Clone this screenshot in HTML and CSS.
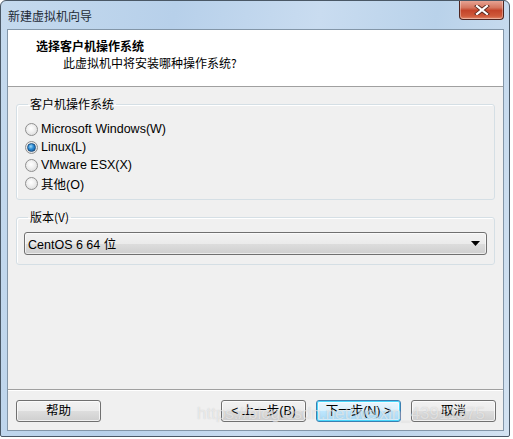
FILE: index.html
```html
<!DOCTYPE html>
<html lang="zh-CN">
<head>
<meta charset="utf-8">
<title>新建虚拟机向导</title>
<link rel="stylesheet" href="styles.css">
</head>
<body>
<div class="window">
  <div class="titlebar">
    <span class="title">新建虚拟机向导</span>
    <button class="close" aria-label="关闭">
      <svg width="18" height="10" viewBox="0 0 18 10">
        <path d="M4 1 L14 9 M14 1 L4 9" stroke="#5a2a20" stroke-width="4" stroke-linecap="square"/>
        <path d="M4 1 L14 9 M14 1 L4 9" stroke="#ffffff" stroke-width="2.2" stroke-linecap="square"/>
      </svg>
    </button>
  </div>
  <div class="client">
    <div class="header">
      <div class="h-title">选择客户机操作系统</div>
      <div class="h-sub">此虚拟机中将安装哪种操作系统?</div>
    </div>
    <div class="body">
      <fieldset class="group os-group">
        <legend>客户机操作系统</legend>
        <label class="radio"><span class="dot"></span>Microsoft Windows(W)</label>
        <label class="radio"><span class="dot on"></span>Linux(L)</label>
        <label class="radio"><span class="dot"></span>VMware ESX(X)</label>
        <label class="radio"><span class="dot"></span>其他(O)</label>
      </fieldset>
      <fieldset class="group ver-group">
        <legend>版本(V)</legend>
        <div class="combo">
          <span>CentOS 6 64 位</span>
          <svg width="9" height="5" viewBox="0 0 9 5"><path d="M0 0 H9 L4.5 5 Z" fill="#000"/></svg>
        </div>
      </fieldset>
    </div>
    <div class="footer">
      <button class="btn">帮助</button>
      <div class="spacer"></div>
      <button class="btn">&lt; 上一步(B)</button>
      <button class="btn default">下一步(N) &gt;</button>
      <button class="btn">取消</button>
    </div>
  </div>
  <div class="watermark">https://blog.csdn.net/weixin_43911375</div>
</div>
</body>
</html>
```
FILE: styles.css
```css
* { box-sizing: border-box; }
body {
  margin: 0;
  background: #ffffff;
  font-family: "Liberation Sans", "Noto Sans CJK SC", sans-serif;
  font-size: 12px;
  color: #000;
}
.window {
  position: relative;
  width: 510px;
  height: 437px;
  border: 1px solid #4a5866;
  border-radius: 6px 6px 2px 2px;
  background: linear-gradient(100deg, #c5daee 0%, #b7d0ea 30%, #c9dcf0 55%, #b9d2ea 75%, #d3e2f1 100%);
  padding: 0 5px 5px 6px;
  display: flex;
  flex-direction: column;
  overflow: hidden;
}
.titlebar {
  height: 28px;
  display: flex;
  align-items: flex-start;
}
.title {
  margin-top: 6px;
  padding-left: 1px;
  font-family: "Noto Sans CJK SC", sans-serif;
  color: #1e2a36;
  font-size: 12px;
}
.close {
  margin-left: auto;
  margin-right: 0;
  margin-top: -1px;
  width: 45px;
  height: 20px;
  border: 1px solid #4e2520;
  border-top: none;
  border-radius: 0 0 4px 4px;
  background: linear-gradient(#e9a99a 0%, #d5765f 40%, #c4442a 55%, #cf5a3b 85%, #e38b6e 100%);
  display: flex;
  align-items: center;
  justify-content: center;
  padding: 0;
  box-shadow: inset 0 0 0 1px rgba(255,255,255,0.35);
}
.client {
  flex: 1;
  border: 1px solid #8396a8;
  background: #f0f0f0;
  display: flex;
  flex-direction: column;
}
.header {
  height: 57px;
  background: #ffffff;
  border-bottom: 1px solid #a0a0a0;
  padding: 8px 0 0 28px;
  font-family: "Noto Sans CJK SC", sans-serif;
}
.h-title {
  font-weight: bold;
  line-height: 16px;
}
.h-sub {
  margin-top: 1px;
  padding-left: 27px;
  line-height: 16px;
}
.body {
  padding: 9px 8px 0 8px;
  flex: 1;
}
.group {
  margin: 0;
  border: 1px solid #d5dfe5;
  border-radius: 3px;
  padding: 0 7px;
  box-shadow: 1px 1px 0 #ffffff inset;
}
.group legend {
  padding: 0 2px;
  margin-left: 4px;
  font-family: "Noto Sans CJK SC", sans-serif;
  line-height: 16px;
  color: #000;
}
.os-group {
  height: 104px;
  padding-top: 8px;
}
.radio {
  display: flex;
  align-items: center;
  height: 18px;
  gap: 3px;
  font-size: 12.5px;
  font-family: "Liberation Sans", "Noto Sans CJK SC", sans-serif;
}
.dot {
  width: 13px;
  height: 13px;
  border-radius: 50%;
  border: 1px solid #8f8f8f;
  background: radial-gradient(circle at 45% 40%, #ffffff 0%, #f0f0f0 40%, #d4d4d4 100%);
  display: flex;
  align-items: center;
  justify-content: center;
  margin-left: 1px;
}
.dot.on::after {
  content: "";
  width: 7px;
  height: 7px;
  border-radius: 50%;
  background: radial-gradient(circle at 40% 35%, #9fd8f7 0%, #2a8ad4 45%, #14508c 100%);
  border: 1px solid #1c4f80;
}
.ver-group {
  margin-top: 9px;
  height: 56px;
  padding-top: 7px;
}
.combo {
  height: 23px;
  border: 1px solid #707070;
  border-radius: 3px;
  background: linear-gradient(#f2f2f2 0%, #ebebeb 50%, #dddddd 51%, #cfcfcf 100%);
  display: flex;
  align-items: center;
  justify-content: space-between;
  padding: 0 6px 0 3px;
  font-size: 12.5px;
  font-family: "Liberation Sans", "Noto Sans CJK SC", sans-serif;
  box-shadow: inset 0 0 0 1px rgba(255,255,255,0.6);
}
.footer {
  height: 41px;
  border-top: 1px solid #a0a0a0;
  box-shadow: inset 0 1px 0 #ffffff;
  display: flex;
  align-items: flex-start;
  padding: 9px 7px 0 8px;
  gap: 10px;
}
.spacer { flex: 1; }
.btn {
  width: 85px;
  height: 22px;
  margin-top: 1px;
  border: 1px solid #707070;
  border-radius: 3px;
  background: linear-gradient(#f2f2f2 0%, #ebebeb 50%, #dddddd 51%, #cfcfcf 100%);
  box-shadow: inset 0 0 0 1px rgba(255,255,255,0.7);
  font-family: "Liberation Sans", "Noto Sans CJK SC", sans-serif;
  font-size: 12.5px;
  color: #000;
  padding: 0;
  line-height: 18px;
}
.btn.default {
  border-color: #3c7fb1;
  box-shadow: inset 0 0 0 1px #48d7fb, inset 0 0 0 2px rgba(255,255,255,0.5);
  background: linear-gradient(#eaf6fd 0%, #d9f0fc 50%, #bee6fd 51%, #a7d9f5 100%);
}
.watermark {
  position: absolute;
  left: 196px;
  top: 403px;
  font-family: "Liberation Sans", sans-serif;
  font-size: 17px;
  color: rgba(255,255,255,0.55);
  text-shadow: 0 0 1px rgba(120,120,120,0.35);
  pointer-events: none;
  white-space: nowrap;
}
```
